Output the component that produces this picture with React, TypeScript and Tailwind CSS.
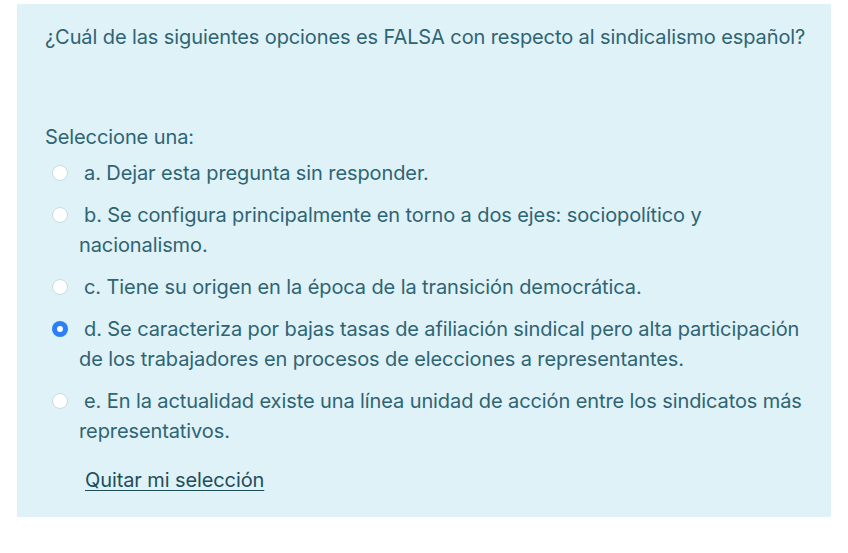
import React from 'react'

const options = [
  { key: 'a', text: 'Dejar esta pregunta sin responder.' },
  { key: 'b', text: 'Se configura principalmente en torno a dos ejes: sociopolítico y nacionalismo.' },
  { key: 'c', text: 'Tiene su origen en la época de la transición democrática.' },
  {
    key: 'd',
    text: 'Se caracteriza por bajas tasas de afiliación sindical pero alta participación de los trabajadores en procesos de elecciones a representantes.',
  },
  { key: 'e', text: 'En la actualidad existe una línea unidad de acción entre los sindicatos más representativos.' },
]

function Radio({ checked }: { checked: boolean }) {
  if (checked) {
    return (
      <span className="flex h-[16px] w-[16px] items-center justify-center rounded-full bg-[#2d7ff9]">
        <span className="h-[6px] w-[6px] rounded-full bg-white" />
      </span>
    )
  }
  return <span className="block h-[16px] w-[16px] rounded-full border-[1.5px] border-[#c6dce4] bg-white" />
}

export default function App() {
  const selected = 'd'

  return (
    <div className="min-h-[553px] bg-white pt-[4px] font-['Inter','Open_Sans',sans-serif] text-[20px] leading-[30px] tracking-[-0.1px] text-[#2f6473]">
      <div className="mx-[17px] w-[814px] bg-[#def2f8] pl-[28px] pr-[14px] pt-[18px] pb-[22px]">
        <p>¿Cuál de las siguientes opciones es FALSA con respecto al sindicalismo español?</p>

        <p className="mt-[70px]">Seleccione una:</p>

        <div className="mt-[6px] flex flex-col gap-[12px]">
          {options.map((o) => (
            <div key={o.key} className="flex">
              <span className="flex w-[34px] shrink-0 pt-[7px] pl-[7px]">
                <Radio checked={o.key === selected} />
              </span>
              <span className="block indent-[5px]">{`${o.key}. ${o.text}`}</span>
            </div>
          ))}
        </div>

        <div className="mt-[19px] pl-[40px]">
          <a href="#" className="text-[#1d4e5c] underline decoration-1 underline-offset-[3px]">
            Quitar mi selección
          </a>
        </div>
      </div>
    </div>
  )
}
